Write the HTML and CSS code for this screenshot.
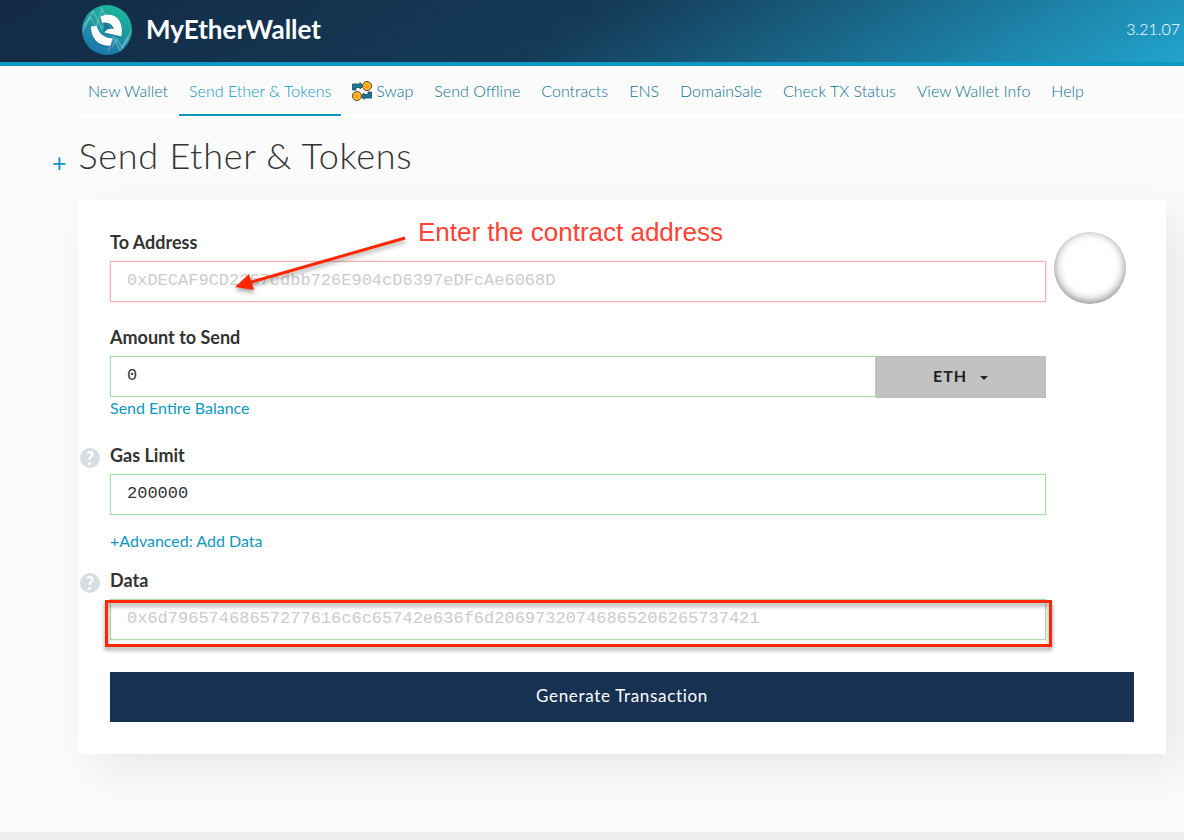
FILE: index.html
```html
<!DOCTYPE html>
<html lang="en">
<head>
<meta charset="utf-8">
<meta name="viewport" content="width=device-width, initial-scale=1">
<title>MyEtherWallet</title>
<link rel="stylesheet" href="styles.css">
</head>
<body>
<header class="header">
  <a class="brand" href="#">
    <svg class="brand-logo" viewBox="0 0 50 50" aria-hidden="true">
      <defs>
        <linearGradient id="disc" x1="0.7" y1="0" x2="0.3" y2="1">
          <stop offset="0" stop-color="#1db898"/>
          <stop offset="1" stop-color="#1c74ae"/>
        </linearGradient>
        <clipPath id="round"><circle cx="25" cy="25" r="25"/></clipPath>
      </defs>
      <circle cx="25" cy="25" r="25" fill="url(#disc)"/>
      <g clip-path="url(#round)" fill="none" stroke="#fff" stroke-opacity=".25" stroke-width="1.4">
        <path d="M0 28 L11 6 L20 24 L24 10 L30 24"/>
        <path d="M1 22 L8 12 L14 22 L20 4 L26 16"/>
        <path d="M26 46 L32 32 L38 46 L49 26"/>
        <path d="M30 42 L35 34 L40 43 L47 32"/>
      </g>
      <path d="M19 12 C27 8 35 11 38 16 C41 21 41 27 40 33 L23 28 Z M9 23 L14 23 L24 33 L30 36 L29 42 C18 43 9 36 9 23 Z" fill="#175f8c" opacity=".5"/>
      <path d="M18.500 11.500 C25 8.500 33 9 37 15 C40 20 40.500 25 39.500 31.500 L22.500 27.500 C24 24 27 23 32 24 C30 18.500 26 16.500 20 18 Z M9 21.500 L14.500 21 C16 25 18 29 22 31 C25 33 28 33.500 30.500 33 L28.500 40.500 C18 42 8.500 34 9 21.500 Z" fill="#fff"/>
    </svg>
    <span class="brand-name">MyEtherWallet</span>
  </a>
  <span class="version">3.21.07</span>
</header>

<nav class="nav" aria-label="Main">
  <a class="nav-link" href="#">New Wallet</a>
  <a class="nav-link nav-link-active" href="#" aria-current="page">Send Ether &amp; Tokens</a>
  <a class="nav-link" href="#"><svg class="swap-icon" viewBox="0 0 20 20" aria-hidden="true">
      <path d="M0.500 9V3H8V1.500L11 5L8 8V6.500H4V9Z" fill="#137a9c" stroke="#24404c" stroke-width=".8"/>
      <circle cx="15" cy="5" r="4.500" fill="#fcbc2c" stroke="#5a4020"/>
      <circle cx="15" cy="5" r="2.200" fill="#f9a01c"/>
      <path d="M19.500 11V17H12V18.500L9 15L12 12V13.500H16V11Z" fill="#137a9c" stroke="#24404c" stroke-width=".8"/>
      <circle cx="5" cy="15" r="4.500" fill="#fcbc2c" stroke="#5a4020"/>
      <circle cx="5" cy="15" r="2.200" fill="#f9a01c"/>
    </svg>Swap</a>
  <a class="nav-link" href="#">Send Offline</a>
  <a class="nav-link" href="#">Contracts</a>
  <a class="nav-link" href="#">ENS</a>
  <a class="nav-link" href="#">DomainSale</a>
  <a class="nav-link" href="#">Check TX Status</a>
  <a class="nav-link" href="#">View Wallet Info</a>
  <a class="nav-link" href="#">Help</a>
</nav>

<main class="main">
  <div class="heading">
    <a class="expand" href="#" aria-label="Show wallet access">+</a>
    <h1 class="title">Send Ether &amp; Tokens</h1>
  </div>

  <form class="card">
    <div class="columns">
      <div class="fields">
        <div class="field">
          <label class="label" for="to">To Address</label>
          <input class="input input-invalid" id="to" type="text" placeholder="0xDECAF9CD2367cdbb726E904cD6397eDFcAe6068D">
        </div>
        <div class="field field-amount">
          <label class="label" for="amount">Amount to Send</label>
          <div class="amount">
            <input class="input" id="amount" type="text" value="0">
            <span class="unit">
              <select class="unit-select" aria-label="Unit"><option>ETH</option></select>
            </span>
          </div>
          <a class="link" href="#">Send Entire Balance</a>
        </div>
        <div class="field field-gas">
          <a class="help" href="#" aria-label="About gas limit">?</a>
          <label class="label" for="gas">Gas Limit</label>
          <input class="input" id="gas" type="text" value="200000">
        </div>
        <a class="link link-advanced" href="#">+Advanced: Add Data</a>
        <div class="field field-data">
          <a class="help" href="#" aria-label="About data">?</a>
          <label class="label" for="data">Data</label>
          <div class="marked">
            <input class="input" id="data" type="text" placeholder="0x6d79657468657277616c6c65742e636f6d20697320746865206265737421">
          </div>
        </div>
      </div>
      <div class="identicon"></div>
    </div>
    <button class="submit" type="button">Generate Transaction</button>

    <svg class="arrow" viewBox="0 0 190 70" aria-hidden="true">
      <path d="M177 8L20 53" stroke="#ff2600" stroke-width="3" fill="none"/>
      <path d="M7 57L21 44L26 60Z" fill="#ff2600"/>
    </svg>
    <span class="note">Enter the contract address</span>
  </form>
</main>
<footer class="footer"></footer>
</body>
</html>
```
FILE: styles.css
```css
* {
  box-sizing: border-box;
}

body {
  display: flex;
  flex-direction: column;
  min-height: 100vh;
  margin: 0;
  background: #fbfbfb;
  color: #333;
  font-family: Lato, "Liberation Sans", sans-serif;
  font-size: 16px;
  line-height: 22px;
}

a {
  color: #0e97c0;
  text-decoration: none;
}

.header {
  display: flex;
  align-items: center;
  justify-content: space-between;
  height: 66px;
  padding: 0 4px 2px 82px;
  border-bottom: 4px solid #0e97c0;
  background: linear-gradient(149deg, #132a45, #143a56 48%, #21a4ce);
}

.brand {
  display: flex;
  align-items: center;
  gap: 14px;
  color: #fff;
}

.brand-logo {
  width: 50px;
  height: 50px;
}

.brand-name {
  padding-bottom: 2px;
  font-size: 26px;
  font-weight: 700;
  line-height: 32px;
}

.version {
  padding-bottom: 2px;
  color: #fff;
  font-weight: 300;
}

.nav {
  display: flex;
  gap: 1px;
  height: 51px;
  margin-left: 78px;
  border-bottom: 2px solid #fff;
  white-space: nowrap;
}

.nav-link {
  display: flex;
  align-items: center;
  height: 50px;
  padding: 2px 10px 0;
  border-bottom: 2px solid transparent;
  color: #0b7290;
  font-weight: 300;
}

.nav-link-active {
  border-bottom-color: #0e97c0;
  color: #0e97c0;
}

.swap-icon {
  width: 20px;
  height: 20px;
  margin-right: 4px;
}

.main {
  flex: 1;
  padding: 14px 18px 78px 52px;
}

.heading {
  display: flex;
  align-items: center;
  gap: 12px;
  margin-bottom: 21px;
}

.expand {
  padding-top: 14px;
  font-size: 25px;
}

.title {
  margin: 0;
  font-size: 36px;
  font-weight: 300;
  line-height: 48px;
  letter-spacing: 0.02em;
}

.card {
  position: relative;
  margin-left: 26px;
  padding: 31px 32px 32px;
  background: #fff;
  box-shadow: 16px 16px 48px rgba(0, 0, 0, 0.08);
}

.columns {
  display: grid;
  grid-template-columns: minmax(0, 1fr) 80px;
  gap: 8px;
}

.field {
  position: relative;
  margin-bottom: 24px;
}

.field-amount {
  margin-bottom: 25px;
}

.field-gas {
  margin-bottom: 15px;
}

.field-data {
  margin-bottom: 32px;
}

.label {
  display: block;
  margin-bottom: 8px;
  font-size: 18px;
  font-weight: 700;
}

.input {
  display: block;
  width: 100%;
  height: 41px;
  padding: 0 16px 2px;
  border: 1px solid #a9dfa9;
  border-radius: 0;
  background: #fff;
  color: #333;
  font-family: "Liberation Mono", monospace;
  font-size: 17px;
  box-shadow: 0 0 2px rgba(120, 210, 120, 0.4);
}

.input::placeholder {
  color: #ccc;
  opacity: 1;
}

.input-invalid {
  border-color: #f5b1b1;
  box-shadow: 0 0 2px rgba(240, 120, 120, 0.4);
}

.amount {
  display: grid;
  grid-template-columns: minmax(0, 1fr) 170px;
  height: 41px;
}

.unit {
  position: relative;
}

.unit::after {
  content: "";
  position: absolute;
  top: 20px;
  right: 58px;
  border: 4px solid transparent;
  border-top-color: #222;
  border-bottom: 0;
  pointer-events: none;
}

.unit-select {
  width: 100%;
  height: 42px;
  padding: 0 56px 3px;
  border: 1px solid #bcbcbc;
  border-radius: 0;
  background: #c2c2c2;
  color: #222;
  appearance: none;
  font: 700 16px Lato, sans-serif;
  letter-spacing: 1px;
}

.link {
  display: block;
}

.link-advanced {
  margin-bottom: 17px;
}

.help {
  position: absolute;
  top: 4px;
  left: -30px;
  width: 20px;
  height: 20px;
  border-radius: 50%;
  background: #d7dee0;
  color: #fff;
  font-size: 18px;
  font-weight: 900;
  line-height: 20px;
  text-align: center;
}

.identicon {
  width: 72px;
  height: 72px;
  margin-top: 1px;
  border-radius: 50%;
  box-shadow: inset 0 -2px 10px rgba(0, 0, 0, 0.5);
}

.submit {
  display: block;
  width: 100%;
  height: 50px;
  padding: 0 0 4px;
  border: 0;
  background: #163151;
  color: #fff;
  font-family: Lato, sans-serif;
  font-size: 17px;
  letter-spacing: 0.04em;
}

.marked {
  position: relative;
}

/* Highlight frame drawn over the data field */
.marked::after {
  content: "";
  position: absolute;
  inset: 1px -6px -7px -5px;
  border: 3px solid #ff2600;
  filter: drop-shadow(0 3px 2px rgba(0, 0, 0, 0.4));
  pointer-events: none;
}

.arrow {
  position: absolute;
  top: 30px;
  left: 150px;
  width: 190px;
  height: 70px;
  filter: drop-shadow(0 3px 2px rgba(0, 0, 0, 0.35));
  pointer-events: none;
}

.note {
  position: absolute;
  top: 16px;
  left: 340px;
  color: #ff4136;
  font-family: "Liberation Sans", sans-serif;
  font-size: 26px;
  line-height: 32px;
}

.footer {
  height: 8px;
  background: #efefef;
}
```
